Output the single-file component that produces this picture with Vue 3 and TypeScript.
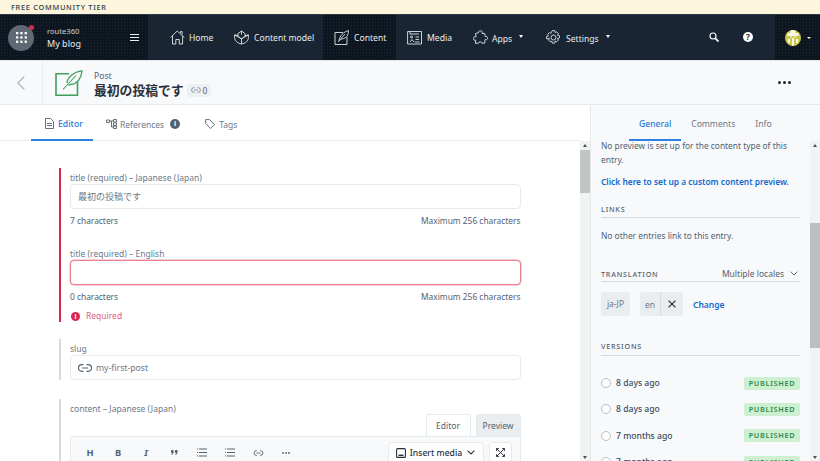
<script setup lang="ts">
const navItems = [
  { label: 'Home', icon: 'home', active: false, caret: false },
  { label: 'Content model', icon: 'model', active: false, caret: false },
  { label: 'Content', icon: 'content', active: true, caret: false },
  { label: 'Media', icon: 'media', active: false, caret: false },
  { label: 'Apps', icon: 'apps', active: false, caret: true },
  { label: 'Settings', icon: 'settings', active: false, caret: true },
]
const versions = ['8 days ago', '8 days ago', '7 months ago', '7 months ago']
</script>

<template>
  <div class="page">
    <div class="banner">FREE COMMUNITY TIER</div>
    <nav class="nav">
      <div class="brand">
        <div class="orb">
          <svg width="11" height="11" viewBox="0 0 11 11" fill="#fff"><g>
            <rect x="0" y="0" width="2.300" height="2.300"/><rect x="4.300" y="0" width="2.300" height="2.300"/><rect x="8.600" y="0" width="2.300" height="2.300"/>
            <rect x="0" y="4.300" width="2.300" height="2.300"/><rect x="4.300" y="4.300" width="2.300" height="2.300"/><rect x="8.600" y="4.300" width="2.300" height="2.300"/>
            <rect x="0" y="8.600" width="2.300" height="2.300"/><rect x="4.300" y="8.600" width="2.300" height="2.300"/><rect x="8.600" y="8.600" width="2.300" height="2.300"/>
          </g></svg>
          <span class="dot"></span>
        </div>
        <div class="brand-text">
          <div class="org">route360</div>
          <div class="space">My blog</div>
        </div>
        <div class="burger"><i></i><i></i><i></i></div>
      </div>
      <div class="nav-items">
        <div v-for="item in navItems" :key="item.label" class="nav-item" :class="[item.icon, { active: item.active }]">
          <svg width="15" height="15" viewBox="0 0 15 15" fill="none" stroke="#dfe5e8" stroke-width=".9">
            <template v-if="item.icon === 'home'">
              <path d="M.6 7.500 7.200 1l7.100 6.500M2.500 6v8h3.300V9.500h3.500V14h3.300V6M10.500 3V1.500h1.600v3"/>
            </template>
            <template v-else-if="item.icon === 'model'">
              <path d="M7.500 1 11 3.500V5.500l3.400-.6v2.800c0 3-3 5.700-6.900 6.300C3.600 13.400.6 10.700.6 7.700V4.900l3.400.6V3.500Z"/>
              <path d="M4 5.500c1 1.600 2 2.700 3.500 3.300C9 8.200 10 7.100 11 5.500M.6 5l6.900 3.800L14.400 5M7.500 8.800V14M7.500 1v3.600"/>
            </template>
            <template v-else-if="item.icon === 'content'">
              <path d="M9 2.500H1v12h12V7"/>
              <path d="M5 10.500C5.500 6 9.500 1.800 14.500.6 14.300 5 12.500 8.700 8 8.800L6.500 10M4 12l7-8"/>
            </template>
            <template v-else-if="item.icon === 'media'">
              <path d="M3 1.500h11.500v12.500H.6V1.500H3V4h9"/>
              <path d="M3 12l2-2.500L7 12M8 12h4.500M8.500 7H12M8.500 9.500h3.500"/><circle cx="4.500" cy="7" r="1"/>
            </template>
            <template v-else-if="item.icon === 'apps'">
              <path d="M5.500 2.800C5 1 7.600.2 8.800 1.300c.7.700.4 1.500 0 2l3 .3.400 3c1.700-.6 2.700.5 2.500 1.700-.2 1.300-1.500 1.800-2.500 1.200l-.6 3.800-2.900-.3c.4-1.500-3-1.700-2.900 0l-3.400.4.300-3.300C1.400 10.700.2 9.700.4 8.300.6 7 2 6.400 3 7l-.4-3.600Z"/>
            </template>
            <template v-else>
              <circle cx="7.500" cy="7.500" r="2.500"/>
              <path d="M6.300.6h2.400l.4 1.900 1.500-.7 1.700 1.700-.8 1.600 1.900.5v2.400l-1.900.5.800 1.600-1.700 1.700-1.500-.8-.4 2.100H6.300l-.5-2.100-1.500.8-1.700-1.700.8-1.600L.6 8.900V6.500l1.800-.5-.8-1.600 1.700-1.700 1.500.7Z"/>
            </template>
          </svg>
          <span>{{ item.label }}</span>
          <em v-if="item.caret" class="caret"></em>
        </div>
      </div>
      <div class="nav-right">
        <svg class="search" width="10" height="10" viewBox="0 0 10 10" fill="none" stroke="#fff" stroke-width="1.100"><circle cx="4" cy="4" r="3"/><path d="M6.300 6.300 9.500 9.500" stroke-width="1.800"/></svg>
        <div class="help">?</div>
        <div class="user">
          <svg width="16" height="16" viewBox="0 0 16 16"><defs><clipPath id="av"><circle cx="8" cy="8" r="8"/></clipPath></defs>
            <g clip-path="url(#av)"><rect width="16" height="16" fill="#c9c84a"/><path d="M5.500 0h5v3h3v3h-3v2h-1V6h-3v2h-1V6h-3V3h3ZM7 8h2v8H7ZM3 9h2v4H3ZM11 9h2v4h-2Z" fill="#f8f7e4"/></g></svg>
          <em class="caret small"></em>
        </div>
      </div>
    </nav>

    <header class="entity-head">
      <div class="back">
        <svg width="8" height="14" viewBox="0 0 8 14" fill="none" stroke="#a8b1ba" stroke-width="1.200"><path d="M7.300.6.800 7l6.500 6.400"/></svg>
      </div>
      <svg class="post-icon" width="28" height="26" viewBox="0 0 28 26" fill="none" stroke="#3f9f5e" stroke-width="1.300">
        <path d="M14 3.700H1v21.600h21.500V12" stroke-width="1.600"/>
        <path d="M12 13C12.500 7.500 19 1.500 27 .8 26.500 7 23 14.500 15.500 14.500l-2 1" />
        <path d="M8 19.500 21 5.500" stroke-width="1.100"/>
      </svg>
      <div class="head-text">
        <div class="kind">Post</div>
        <div class="title-row">
          <h1>最初の投稿です</h1>
          <span class="link-badge">
            <svg width="10" height="6" viewBox="0 0 10 6" fill="none" stroke="#8091a5" stroke-width=".9"><path d="M3.500.6H3a2.400 2.400 0 0 0 0 4.800h.5M6.500.6H7a2.400 2.400 0 0 1 0 4.800h-.5M3 3h4"/></svg>
            0
          </span>
        </div>
      </div>
      <div class="more"><i></i><i></i><i></i></div>
    </header>

    <div class="body">
      <main class="main">
        <div class="tabs">
          <div class="tab on">
            <svg width="9" height="11" viewBox="0 0 9 11" fill="none" stroke="#536171" stroke-width=".9"><path d="M.5.500h5l3 3v7h-8zM2 5.500h5M2 7.500h5"/></svg>
            Editor
          </div>
          <div class="tab refs">
            <svg width="11" height="10" viewBox="0 0 11 10" fill="none" stroke="#536171" stroke-width=".9"><path d="M.5 1h3v2.500h-3zM7.500.5H10.500V3h-3zM7.500 4h3v2.500h-3zM7.500 7h3v2.500h-3zM3.500 2H7.500M5.500 2v6h2"/></svg>
            References
            <span class="info">i</span>
          </div>
          <div class="tab tags">
            <svg width="10" height="10" viewBox="0 0 10 10" fill="none" stroke="#536171" stroke-width=".9"><path d="M.6.600h3.900l5 5-3.900 3.900-5-5z"/></svg>
            Tags
          </div>
        </div>
        <div class="form-wrap">
          <div class="form">
            <section class="field-group bad">
              <label>title (required) – Japanese (Japan)</label>
              <div class="input">最初の投稿です</div>
              <div class="meta"><span>7 characters</span><span>Maximum 256 characters</span></div>
              <label class="second">title (required) – English</label>
              <div class="input err"></div>
              <div class="meta"><span>0 characters</span><span>Maximum 256 characters</span></div>
              <div class="required"><span class="req-i">i</span>Required</div>
            </section>
            <section class="field-group">
              <label>slug</label>
              <div class="input slug">
                <svg width="14" height="8" viewBox="0 0 14 8" fill="none" stroke="#536171" stroke-width="1.200"><path d="M5.500.7H3.800a3.300 3.300 0 0 0 0 6.600h1.700M8.500.7h1.700a3.300 3.300 0 0 1 0 6.600H8.500M4 4h6"/></svg>
                my-first-post
              </div>
            </section>
            <section class="field-group last">
              <label>content – Japanese (Japan)</label>
              <div class="mode-row">
                <span class="mode">Editor</span>
                <span class="mode pressed">Preview</span>
              </div>
              <div class="toolbar">
                <b class="tool">H</b><b class="tool">B</b><b class="tool it">I</b>
                <span class="tool"><svg width="7" height="5" viewBox="0 0 7 5" fill="#536171"><path d="M0 1.200a1.200 1.200 0 1 1 2.700 0C2.700 3 2 4.300.6 5L.3 4.400c.5-.4.800-.9.900-1.500A1.300 1.300 0 0 1 0 1.200ZM3.900 1.200a1.200 1.200 0 1 1 2.700 0c0 1.800-.7 3.100-2.100 3.800l-.3-.6c.5-.4.800-.9.900-1.500a1.300 1.300 0 0 1-1.200-1.700Z"/></svg></span>
                <span class="tool"><svg width="10" height="9" viewBox="0 0 10 9" stroke="#536171" fill="none"><path d="M2 1h8M2 4.500h8M2 8h8M0 1h1M0 4.500h1M0 8h1"/></svg></span>
                <span class="tool"><svg width="10" height="9" viewBox="0 0 10 9" stroke="#536171" fill="none"><path d="M2 1h8M2 4.500h8M2 8h8M0 1h1M0 4.500h1M0 8h1"/></svg></span>
                <span class="tool"><svg width="11" height="6" viewBox="0 0 10 6" fill="none" stroke="#536171" stroke-width=".9"><path d="M3.500.6H3a2.400 2.400 0 0 0 0 4.800h.5M6.500.6H7a2.400 2.400 0 0 1 0 4.800h-.5M3 3h4"/></svg></span>
                <span class="tool"><svg width="8" height="2" viewBox="0 0 8 2" fill="#536171"><circle cx="1" cy="1" r=".9"/><circle cx="4" cy="1" r=".9"/><circle cx="7" cy="1" r=".9"/></svg></span>
                <span class="spacer"></span>
                <span class="btn insert">
                  <svg width="10" height="10" viewBox="0 0 10 10" fill="none" stroke="#2a3039" stroke-width="1.100"><rect x=".6" y=".6" width="8.800" height="8.800" rx="1"/><path d="M2.500 7.300h5" stroke-width="1.400"/></svg>
                  Insert media
                  <svg class="chev" width="8" height="5" viewBox="0 0 8 5" fill="none" stroke="#2a3039" stroke-width="1.100"><path d="m.6.600 3.400 3.400L7.400.6"/></svg>
                </span>
                <span class="btn expand">
                  <svg width="9" height="9" viewBox="0 0 9 9" fill="#2a3039" stroke="#2a3039" stroke-width=".9"><path d="M.5.500h2l-2 2zM8.500.5h-2l2 2zM.5 8.500h2l-2-2zM8.500 8.500h-2l2-2zM2 2l5 5M7 2 2 7"/></svg>
                </span>
              </div>
            </section>
          </div>
        </div>
      </main>
      <div class="scroll main-scroll"><span class="arrow up"></span><span class="thumb"></span><span class="arrow down"></span></div>
      <aside class="side">
        <div class="side-tabs">
          <div class="stab on">General</div>
          <div class="stab">Comments</div>
          <div class="stab">Info</div>
        </div>
        <div class="side-body">
          <div class="side-inner">
            <p class="preview">No preview is set up for the content type of this entry.</p>
            <a class="setup">Click here to set up a custom content preview.</a>
            <h4 class="links-h">LINKS</h4>
            <p class="nolinks">No other entries link to this entry.</p>
            <div class="trans-h">
              <h4>TRANSLATION</h4>
              <span class="multi">Multiple locales
                <svg width="8" height="5" viewBox="0 0 8 5" fill="none" stroke="#536171" stroke-width=".9"><path d="m.6.600 3.400 3.400L7.400.6"/></svg>
              </span>
            </div>
            <div class="locales">
              <span class="pill">ja-JP</span>
              <span class="pill joined"><span class="pl">en</span><span class="px">
                <svg width="8" height="8" viewBox="0 0 8 8" stroke="#2a3039" stroke-width="1.200"><path d="m.6.600 6.800 6.800M7.400.6.600 7.400"/></svg>
              </span></span>
              <a class="change">Change</a>
            </div>
            <h4 class="versions-h">VERSIONS</h4>
            <div class="versions">
              <div v-for="(v, i) in versions" :key="i" class="version">
                <span class="radio"></span>
                <span class="when">{{ v }}</span>
                <span class="pub">PUBLISHED</span>
              </div>
            </div>
          </div>
          <div class="scroll side-scroll"><span class="arrow up"></span><span class="thumb"></span><span class="arrow down"></span></div>
        </div>
      </aside>
    </div>
  </div>
</template>

<style>
html, body { margin: 0; overflow: hidden; background: #fff; }
</style>

<style scoped>
* { box-sizing: border-box; }
.page { width: 820px; height: 461px; overflow: hidden; display: flex; flex-direction: column; font-family: "Noto Sans", "Noto Sans CJK JP", sans-serif; color: #536171; font-size: 8.400px; }
.banner { height: 15px; flex: none; background: #fdf6dc; color: #2f3a47; font-size: 7.400px; font-weight: 500; letter-spacing: .7px; padding: 0 11px; line-height: 15px; border-bottom: 1px solid #2c3a45; }
.nav { height: 45px; flex: none; display: flex; background: #192532; color: #e8edef; }
.brand, .nav-item.active, .user { background-color: #0d151f; background-image: radial-gradient(circle, #1c2733 .6px, transparent .7px); background-size: 3px 3px; }
.brand { width: 148px; flex: none; display: flex; align-items: center; padding-left: 8px; position: relative; }
.orb { width: 26px; height: 26px; border-radius: 50%; background-color: #3a4551; background-image: radial-gradient(circle, #8a929b .6px, transparent .8px); background-size: 2px 2px; display: flex; align-items: center; justify-content: center; position: relative; }
.dot { position: absolute; width: 5px; height: 5px; border-radius: 50%; background: #da294a; top: 0; right: .5px; }
.brand-text { margin-left: 13px; }
.org { font-size: 7.600px; line-height: 11px; color: #cfd5da; }
.space { font-size: 9px; line-height: 13px; color: #e8edef; }
.burger { position: absolute; left: 130px; top: 19px; display: flex; flex-direction: column; gap: 1.500px; }
.burger i { display: block; width: 9px; height: 1.300px; background: #e8edef; }
.nav-items { display: flex; flex: none; padding-left: 22px; }
.nav-item { display: flex; align-items: center; font-size: 8.600px; height: 45px; color: #e8edef; white-space: nowrap; flex: none; }
.nav-item svg { flex: none; margin-right: 5px; }
.nav-item.home svg, .nav-item.apps svg { margin-right: 4px; }
.nav-item.home { width: 64px; }
.nav-item.model { width: 89px; }
.nav-item.content { width: 73px; padding-left: 11px; }
.nav-item.media { width: 77px; padding-left: 11px; }
.nav-item.apps { width: 73px; }
.nav-item.settings { width: 80px; }
.nav-item.apps span, .nav-item.settings span { position: relative; top: 1px; }
.caret { width: 0; height: 0; border-left: 2.700px solid transparent; border-right: 2.700px solid transparent; border-top: 3px solid #fff; margin-left: 7px; margin-top: -2px; }
.nav-right { flex: 1; position: relative; }
.search { position: absolute; left: 83px; top: 17px; }
.help { position: absolute; left: 117px; top: 17px; width: 10px; height: 10px; border-radius: 50%; background: #fff; color: #192532; font-size: 8px; font-weight: 700; line-height: 10px; text-align: center; }
.user { position: absolute; right: 0; top: 0; width: 45px; height: 45px; display: flex; align-items: center; padding-left: 10px; }
.caret.small { margin-left: 6px; margin-top: 0; border-width: 2.500px 2.500px 0; }
.entity-head { height: 45px; flex: none; background: #f7f9fa; display: flex; align-items: center; border-top: 1px solid #e5ebed; border-bottom: 1px solid #e5ebed; }
.back { width: 43px; height: 43px; flex: none; display: flex; align-items: center; justify-content: center; border-right: 1px solid #eceff1; }
.post-icon { margin-left: 12px; flex: none; }
.head-text { margin-left: 11px; padding-top: 3px; }
.kind { font-size: 8.600px; line-height: 11px; color: #536171; }
.title-row { display: flex; align-items: center; height: 15px; margin-top: 1px; }
h1 { margin: 0; font-size: 12.800px; line-height: 15px; font-weight: 600; color: #2a3039; }
.link-badge { display: inline-flex; align-items: center; gap: 2px; height: 13px; background: #edf0f2; border-radius: 3px; padding: 0 4px; margin-left: 3px; font-size: 8.400px; color: #536171; }
.more { margin-left: auto; margin-right: 29px; display: flex; gap: 1.500px; }
.more i { width: 3.500px; height: 3.500px; border-radius: 50%; background: #192532; }
.body { flex: 1; display: flex; min-height: 0; }
.main { width: 580px; display: flex; flex-direction: column; flex: none; min-height: 0; }
.tabs { height: 36px; flex: none; display: flex; border-bottom: 1px solid #e5ebed; padding-left: 31px; }
.tab { display: flex; align-items: center; gap: 4px; font-size: 8.500px; height: 36px; color: #6b7889; white-space: nowrap; flex: none; padding-top: 2px; }
.tab.on { color: #1f79dd; border-bottom: 2px solid #2d81e3; width: 62px; font-weight: 500; padding-left: 14px; padding-top: 3px; font-size: 8.700px; }
.tab.refs { margin-left: 13px; gap: 3px; }
.tab.tags { margin-left: 25px; gap: 4px; }
.info { width: 10px; height: 10px; border-radius: 50%; background: #536171; color: #fff; font-size: 7px; font-weight: 700; line-height: 10px; text-align: center; margin-left: 3px; }
.form-wrap { flex: 1; background: #fff; min-height: 0; overflow: hidden; padding: 27px 0 0 59px; }
.form { width: 461.500px; }
.field-group { border-left: 2px solid #d3dce0; padding-left: 9px; margin-bottom: 17px; }
.field-group.bad { border-left-color: #da294a; }
.field-group.last { margin-bottom: 0; margin-top: 19px; }
label { display: block; font-size: 8.500px; line-height: 13px; color: #6b7889; padding-top: 3px; height: 16px; }
label.second { margin-top: 17px; }
.input { height: 25px; border: 1px solid #e5ebed; border-radius: 4px; padding: 0 7px; display: flex; align-items: center; font-size: 9px; color: #6b7889; background: #fff; }
.input.err { border-color: #e8808f; box-shadow: 0 0 0 .5px #f0a8b4; }
.input.slug { gap: 4px; font-size: 8.700px; }
.meta { display: flex; justify-content: space-between; font-size: 8.400px; line-height: 12px; color: #536171; margin-top: 6px; }
.required { display: flex; align-items: center; margin-top: 7px; font-size: 8.500px; line-height: 12px; color: #e0607e; height: 12px; }
.req-i { width: 9px; height: 9px; border-radius: 50%; background: #da294a; color: #fff; font-size: 6.500px; line-height: 9px; text-align: center; font-weight: 700; margin: 0 6px 0 1px; }
.mode-row { display: flex; justify-content: flex-end; gap: 5px; height: 22px; margin-top: -1px; }
.mode { width: 45px; height: 22px; border: 1px solid #e5ebed; border-bottom: none; border-radius: 3px 3px 0 0; font-size: 8.500px; line-height: 22px; text-align: center; color: #536171; }
.mode.pressed { background: #eaeef0; }
.toolbar { display: flex; align-items: center; height: 33px; border: 1px solid #e5ebed; background: #f7f9fa; padding: 0 8px 0 5px; border-radius: 3px 0 0 0; }
.tool { width: 28px; flex: none; text-align: center; font-size: 9.300px; font-weight: 700; color: #536171; display: flex; align-items: center; justify-content: center; font-style: normal; }
.tool.it { font-style: italic; }
.spacer { flex: 1; }
.btn { height: 22px; background: #fff; border: 1px solid #e5ebed; border-radius: 4px; display: inline-flex; align-items: center; justify-content: center; color: #2a3039; font-size: 8.600px; font-weight: 500; flex: none; }
.insert { width: 96px; gap: 4px; }
.chev { margin-left: 1px; }
.expand { width: 23px; margin-left: 5px; }
.scroll { width: 10px; flex: none; background: #f1f2f3; position: relative; }
.thumb { position: absolute; left: 0; width: 10px; background: #bcbfc0; }
.main-scroll .thumb { top: 9px; height: 43px; background: #c1c3c4; }
.side-scroll .thumb { top: 82px; height: 125px; }
.arrow { position: absolute; left: 2.500px; width: 0; height: 0; border-left: 2.500px solid transparent; border-right: 2.500px solid transparent; }
.arrow.up { top: 3px; border-bottom: 3px solid #505050; }
.arrow.down { bottom: 2px; border-top: 3px solid #505050; }
.main-scroll { margin-top: 36px; }
.side-scroll { margin-top: 3px; }
.side { width: 230px; flex: none; background: #f7f9fa; border-left: 1px solid #e5ebed; display: flex; flex-direction: column; min-height: 0; }
.side-tabs { height: 36px; flex: none; display: flex; padding-left: 38px; margin-bottom: -3px; }
.stab { font-size: 8.600px; line-height: 39px; height: 36px; padding: 0 10px; color: #6b7889; flex: none; }
.stab.on { color: #1f79dd; font-weight: 500; border-bottom: 2px solid #2d81e3; }
.side-body { flex: 1; display: flex; min-height: 0; overflow: hidden; }
.side-inner { flex: 1; padding: 0 10px; min-width: 0; overflow: hidden; }
.preview { margin: 1px 0 0; font-size: 8.400px; line-height: 13.500px; color: #536171; }
.setup { display: block; font-size: 8.400px; font-weight: 600; color: #1169d0; line-height: 13px; margin-top: 9px; white-space: nowrap; }
h4 { margin: 0; font-size: 7.200px; font-weight: 500; letter-spacing: .8px; color: #536171; }
.links-h { margin-top: 16px; padding-bottom: 2px; border-bottom: 1px solid #d3dce0; line-height: 11px; }
.nolinks { margin: 11px 0 0; font-size: 8.400px; line-height: 13px; }
.trans-h { display: flex; justify-content: space-between; align-items: center; margin-top: 24px; border-bottom: 1px solid #d3dce0; height: 16px; }
.multi { font-size: 8.500px; display: inline-flex; align-items: center; gap: 6px; padding-right: 2px; }
.locales { display: flex; align-items: center; margin-top: 10px; }
.pill { height: 23.500px; background: #e9edef; border-radius: 3px; display: inline-flex; align-items: center; justify-content: center; width: 29px; font-size: 8.500px; color: #6b7889; }
.pill.joined { margin-left: 10px; width: 43px; }
.pl { width: 21px; height: 23.500px; text-align: center; border-right: 1px solid #d3dce0; line-height: 26px; }
.px { flex: 1; display: flex; align-items: center; justify-content: center; }
.change { font-size: 8.500px; font-weight: 600; color: #1169d0; margin-left: 10px; padding-top: 2px; }
.versions-h { margin-top: 25.500px; padding-bottom: 3px; border-bottom: 1px solid #d3dce0; line-height: 11px; }
.versions { margin-top: 14px; }
.version { display: flex; align-items: center; height: 26.300px; }
.radio { width: 10px; height: 10px; border-radius: 50%; border: 1px solid #b9c0c6; background: #fff; margin-right: 5px; flex: none; }
.when { font-size: 8.600px; font-weight: 500; color: #414d63; }
.pub { margin-left: auto; width: 56px; height: 13px; background: #ccf0d0; border-radius: 2px; color: #2f8a4d; font-size: 7.300px; font-weight: 600; letter-spacing: .7px; line-height: 13px; text-align: center; }
</style>
